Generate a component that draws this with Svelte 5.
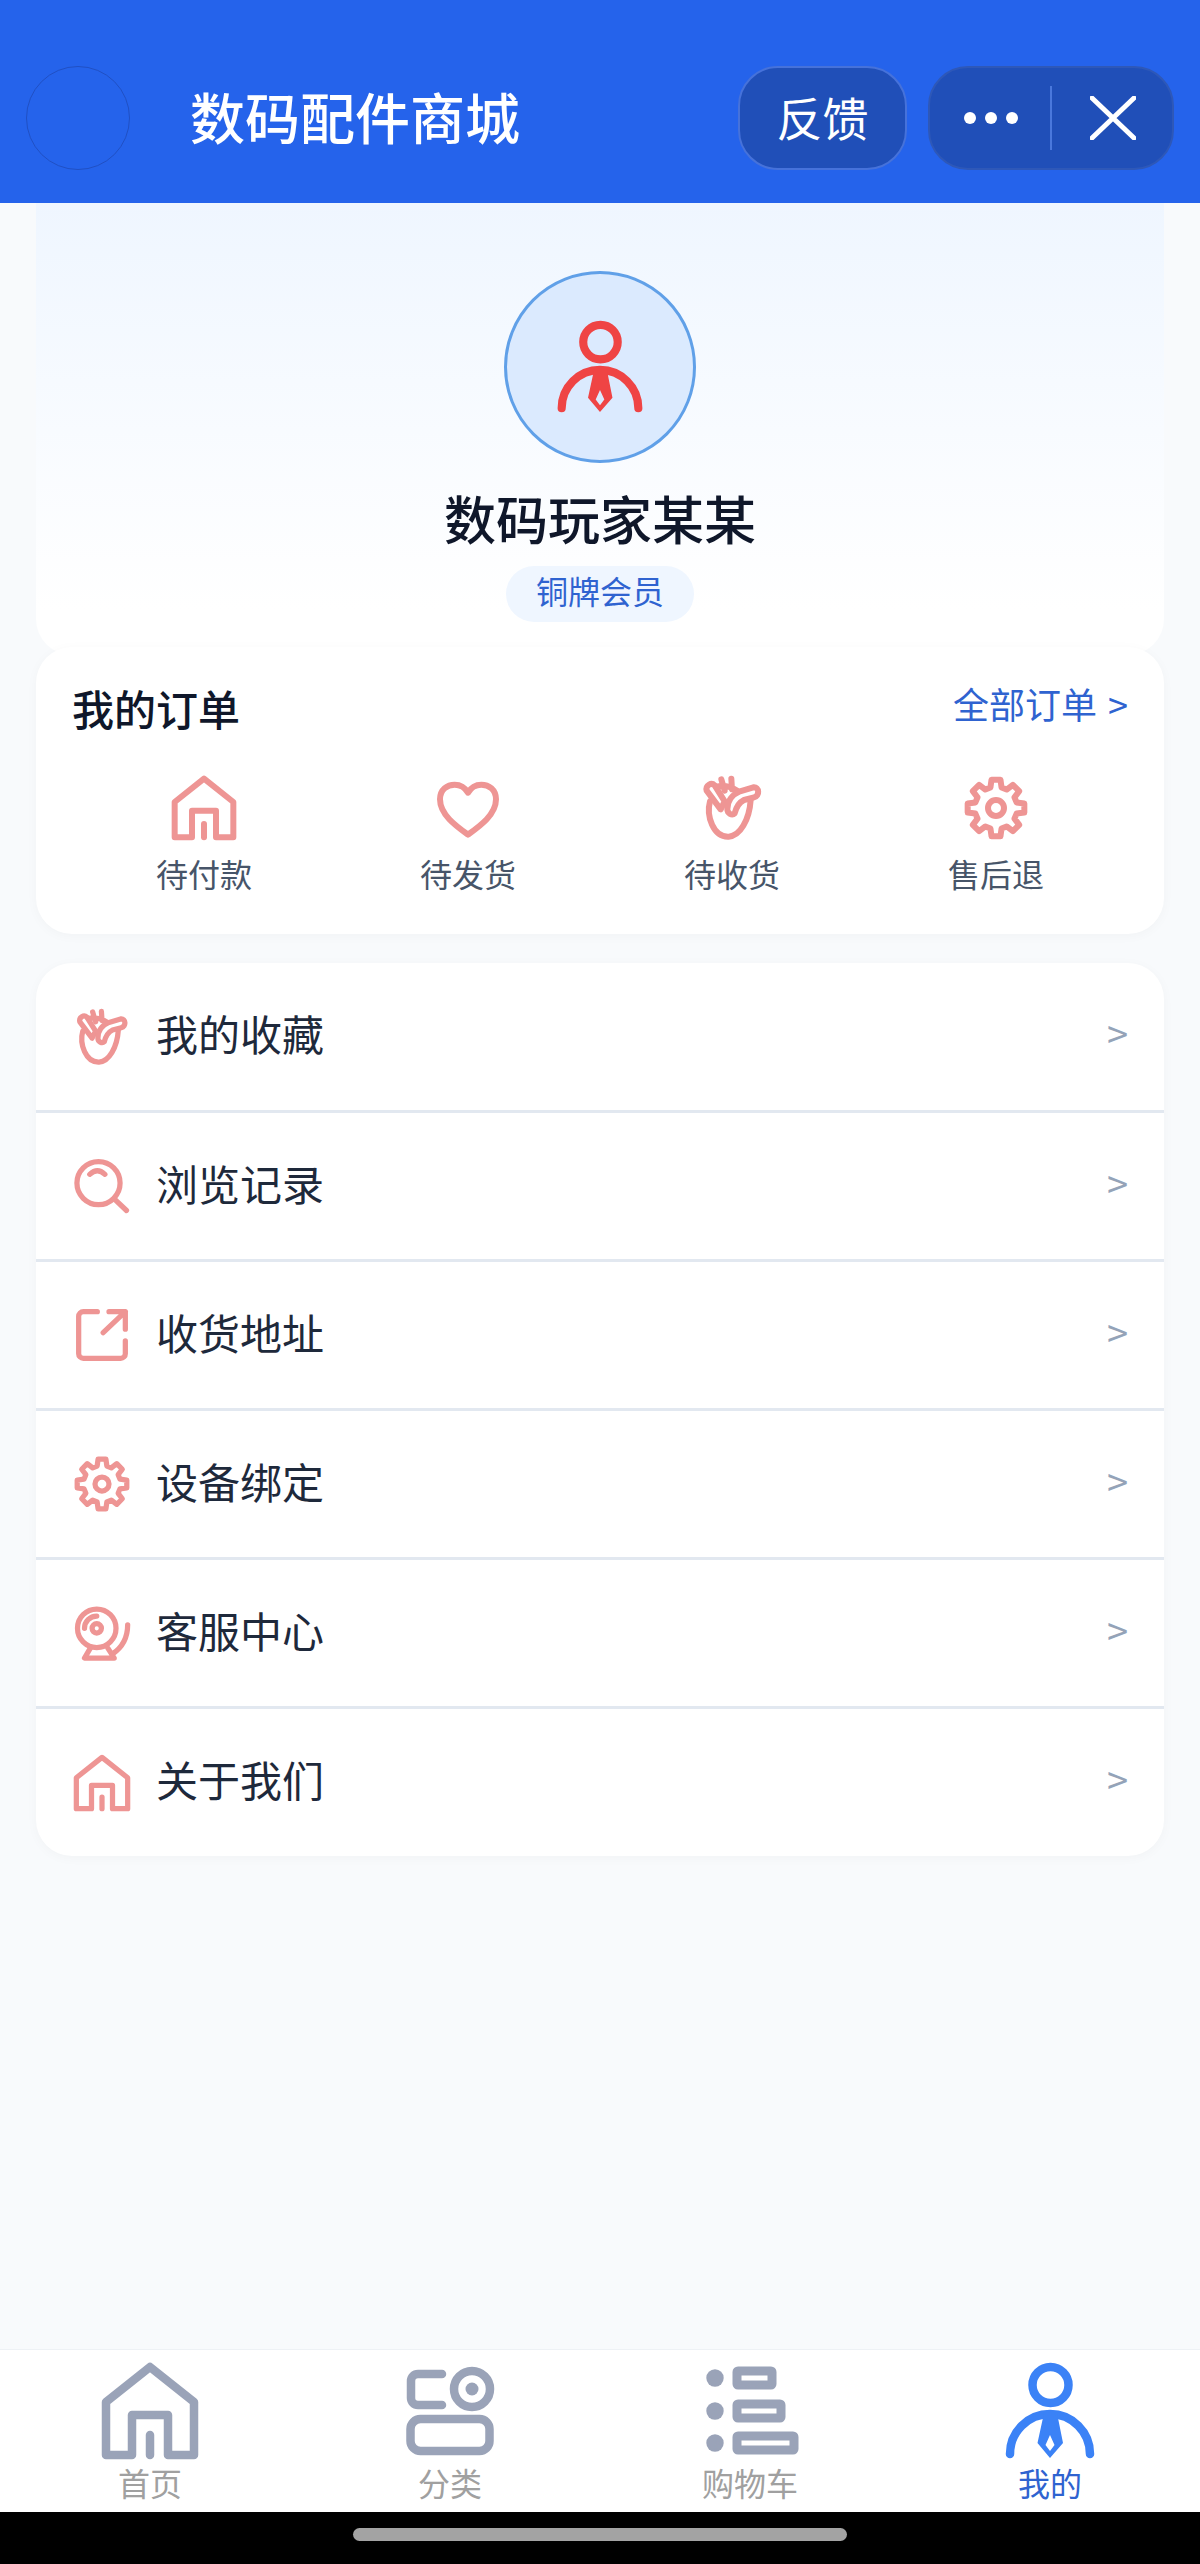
<script>
  const orders = [
    { icon: 'home', label: '待付款' },
    { icon: 'heart', label: '待发货' },
    { icon: 'organ', label: '待收货' },
    { icon: 'gear', label: '售后退' }
  ];
  const menu = [
    { icon: 'organ', label: '我的收藏' },
    { icon: 'search', label: '浏览记录' },
    { icon: 'share', label: '收货地址' },
    { icon: 'gear', label: '设备绑定' },
    { icon: 'bell', label: '客服中心' },
    { icon: 'home', label: '关于我们' }
  ];
  const tabs = [
    { icon: 'home', label: '首页' },
    { icon: 'apps', label: '分类' },
    { icon: 'list', label: '购物车' },
    { icon: 'person', label: '我的', active: true }
  ];

  function gearPath() {
    const pts = [];
    const p = (r, deg) => {
      const a = (deg * Math.PI) / 180;
      return (48 + r * Math.cos(a)).toFixed(1) + ' ' + (48 + r * Math.sin(a)).toFixed(1);
    };
    for (let i = 0; i < 8; i++) {
      const c = i * 45 - 90;
      pts.push(p(32, c - 15), p(43, c - 9), p(43, c + 9), p(32, c + 15));
    }
    return 'M' + pts.join('L') + 'Z';
  }
  const gear = gearPath();
</script>

{#snippet icon(name)}
  <svg class="ic" viewBox="0 0 96 96">
    {#if name === 'home'}
      <path d="M30 92H4V39L48 4L92 39V92H66V52H30Z" />
      <path d="M48 72V92" />
    {:else if name === 'heart'}
      <path d="M48 88C30 75 6 58 6 35C6 20 17 13 28 13C37 13 44 18 48 25C52 18 59 13 68 13C79 13 90 20 90 35C90 58 66 75 48 88Z" />
    {:else if name === 'organ'}
      <path d="M15 38C9 60 20 92 43 91C60 90 74 66 76 36" />
      <path d="M10 22C8 14 17 9 22 14L37 38L31 50Z" />
      <path d="M32 5L37 22M47 4L48 20M24 16C34 14 44 14 56 22" />
      <path d="M41 50C41 38 48 28 60 23L80 17C89 16 90 30 81 32L66 36C58 40 54 48 52 56C48 60 41 56 41 50Z" />
    {:else if name === 'gear'}
      <path d={gear} />
      <circle cx="48" cy="48" r="12" />
    {:else if name === 'search'}
      <circle cx="42" cy="43" r="37" />
      <path d="M69 70L90 90M27 28Q40 16 53 28" />
    {:else if name === 'share'}
      <path d="M40 8H16A8 8 0 0 0 8 16V80A8 8 0 0 0 16 88H80A8 8 0 0 0 88 80V58" />
      <path d="M60 8H88V38M88 8L50 44" />
    {:else if name === 'bell'}
      <circle cx="39" cy="40" r="33" />
      <circle cx="39" cy="40" r="8" />
      <path d="M18 40A21 21 0 0 1 39 19M28 74L18 91H69L58 74M92 34C92 55 84 72 66 84" />
    {:else if name === 'apps'}
      <path d="M40 11H16A7 7 0 0 0 9 18V35A7 7 0 0 0 16 42H40" />
      <circle cx="70" cy="26" r="18" />
      <circle class="solid" cx="70" cy="26" r="6.5" />
      <rect x="8.5" y="56" width="79" height="32" rx="10" />
    {:else if name === 'list'}
      <circle class="solid" cx="13" cy="15" r="8.7" />
      <circle class="solid" cx="13" cy="48" r="8.7" />
      <circle class="solid" cx="13" cy="80" r="8.7" />
      <rect class="sq" x="35" y="8" width="35" height="14" rx="1" />
      <rect class="sq" x="35" y="41" width="44" height="14" rx="1" />
      <rect class="sq" x="35" y="73" width="57" height="14" rx="1" />
    {:else if name === 'person'}
      <circle cx="48.5" cy="22" r="18" />
      <path d="M8 91A40 40 0 0 1 88 91" />
      <path class="solid" fill-rule="evenodd" d="M42 50L35.5 80L48 95L61 80L55 50ZM48 72L43.5 82L48 88L52.5 82Z" />
    {/if}
  </svg>
{/snippet}

<div class="page">
  <header class="top">
    <div class="ghost"></div>
    <h1>数码配件商城</h1>
    <div class="feedback">反馈</div>
    <div class="capsule">
      <div class="more"><i></i><i></i><i></i></div>
      <div class="close">
        <svg viewBox="0 0 46 44"><path d="M2 2L44 42M44 2L2 42" /></svg>
      </div>
    </div>
  </header>

  <main>
    <section class="profile">
      <div class="avatar">{@render icon('person')}</div>
      <div class="name">数码玩家某某</div>
      <div class="tag">铜牌会员</div>
    </section>

    <section class="card orders">
      <div class="orders-head">
        <span class="orders-title">我的订单</span>
        <span class="orders-all">全部订单 &gt;</span>
      </div>
      <div class="orders-grid">
        {#each orders as o}
          <div class="order">
            <span class="pink order-ic">{@render icon(o.icon)}</span>
            <span class="order-label">{o.label}</span>
          </div>
        {/each}
      </div>
    </section>

    <section class="card menu">
      {#each menu as m}
        <div class="row">
          <span class="pink row-ic">{@render icon(m.icon)}</span>
          <span class="row-label">{m.label}</span>
          <span class="chev">&gt;</span>
        </div>
      {/each}
    </section>
  </main>

  <nav class="tabs">
    {#each tabs as t}
      <div class="tab" class:active={t.active}>
        <span class="tab-ic">{@render icon(t.icon)}</span>
        <span class="tab-label">{t.label}</span>
      </div>
    {/each}
  </nav>

  <div class="sys"><div class="bar"></div></div>
</div>

<style>
  :global(body) {
    margin: 0;
    background: #f8fafc;
  }
  .page {
    width: 1200px;
    height: 2564px;
    display: flex;
    flex-direction: column;
    font-family: "Noto Sans CJK SC", "Noto Sans", sans-serif;
    overflow: hidden;
  }
  .ic {
    display: block;
    width: 100%;
    height: 100%;
    fill: none;
    stroke: currentColor;
    stroke-width: 8.5;
    stroke-linecap: round;
    stroke-linejoin: round;
    overflow: visible;
  }
  .ic .solid {
    fill: currentColor;
    stroke: none;
  }
  .ic .sq {
    stroke-linejoin: miter;
    stroke-width: 9;
  }
  .pink .ic {
    stroke-width: 9;
  }

  .top {
    height: 203px;
    box-sizing: border-box;
    flex: none;
    background: #2563eb;
    padding: 66px 26px 33px 26px;
    display: flex;
    align-items: stretch;
    color: #fff;
  }
  .ghost {
    width: 104px;
    border-radius: 50%;
    border: 1px solid #2050c4;
    box-sizing: border-box;
  }
  h1 {
    margin: 0 0 0 60px;
    flex: 1;
    font-size: 55px;
    font-weight: 500;
    line-height: 98px;
    letter-spacing: 0;
  }
  .feedback {
    width: 169px;
    box-sizing: border-box;
    border: 2px solid #4672da;
    border-radius: 40px;
    background: #204fb8;
    font-size: 46px;
    line-height: 96px;
    text-align: center;
    font-weight: 400;
  }
  .capsule {
    width: 246px;
    margin-left: 21px;
    box-sizing: border-box;
    border: 2px solid #2e58b8;
    border-radius: 40px;
    background: #204fb8;
    display: flex;
    align-items: center;
  }
  .more {
    width: 122px;
    height: 64px;
    box-sizing: border-box;
    display: flex;
    justify-content: center;
    align-items: center;
    gap: 9px;
    border-right: 2px solid #4a78dc;
    padding-left: 2px;
  }
  .more i {
    display: block;
    width: 12px;
    height: 12px;
    border-radius: 50%;
    background: #fff;
  }
  .close {
    flex: 1;
    display: flex;
    justify-content: center;
    padding-left: 2px;
  }
  .close svg {
    width: 46px;
    height: 44px;
    fill: none;
    stroke: #fff;
    stroke-width: 5;
    stroke-linecap: round;
  }

  main {
    flex: 1;
    padding: 0 36px;
    min-height: 0;
  }
  .profile {
    height: 452px;
    box-sizing: border-box;
    padding-top: 68px;
    border-radius: 0 0 36px 36px;
    background: linear-gradient(180deg, #eff6ff, #ffffff 90%);
    display: flex;
    flex-direction: column;
    align-items: center;
  }
  .avatar {
    width: 192px;
    height: 192px;
    flex: none;
    box-sizing: border-box;
    border-radius: 50%;
    border: 3px solid #60a0e8;
    background: #dbeafe;
    color: #ef4444;
    padding: 47px;
  }
  .name {
    margin-top: 19px;
    font-size: 52px;
    line-height: 72px;
    font-weight: 500;
    color: #0f172a;
  }
  .tag {
    margin-top: 12px;
    width: 188px;
    height: 56px;
    border-radius: 28px;
    background: #eff6ff;
    color: #2f63d0;
    font-size: 32px;
    line-height: 48px;
    text-align: center;
  }
  .card {
    background: #fff;
    border-radius: 36px;
    box-shadow: 0 2px 12px rgba(15, 23, 42, 0.03);
    position: relative;
  }
  .orders {
    margin-top: -8px;
    height: 287px;
    box-sizing: border-box;
    padding: 36px 36px 0;
  }
  .orders-head {
    display: flex;
    justify-content: space-between;
    align-items: flex-start;
  }
  .orders-title {
    font-size: 42px;
    line-height: 50px;
    font-weight: 500;
    color: #0f172a;
  }
  .orders-all {
    font-size: 36px;
    line-height: 40px;
    color: #2f63d0;
    word-spacing: 3px;
  }
  .orders-grid {
    margin-top: 43px;
    display: grid;
    grid-template-columns: repeat(4, 1fr);
  }
  .order {
    display: flex;
    flex-direction: column;
    align-items: center;
  }
  .pink {
    color: #ee9594;
  }
  .order-ic {
    display: block;
    width: 64px;
    height: 64px;
  }
  .order-label {
    margin-top: 11px;
    font-size: 32px;
    line-height: 44px;
    color: #475569;
  }
  .menu {
    margin-top: 29px;
    overflow: hidden;
  }
  .row {
    height: 146px;
    display: flex;
    align-items: center;
    padding: 0 36px 0 38px;
    border-bottom: 3px solid #e2e8f0;
  }
  .row:first-child {
    height: 147px;
  }
  .row:last-child {
    border-bottom: none;
    height: 147px;
  }
  .row-ic {
    display: block;
    width: 56px;
    height: 56px;
    flex: none;
  }
  .row-label {
    margin-left: 26px;
    flex: 1;
    font-size: 42px;
    line-height: 56px;
    padding-bottom: 7px;
    color: #1e293b;
  }
  .chev {
    font-size: 38px;
    line-height: 56px;
    padding-bottom: 7px;
    color: #94a3b8;
  }

  .tabs {
    flex: none;
    height: 163px;
    box-sizing: border-box;
    background: #fff;
    border-top: 1px solid #eef1f5;
    padding-top: 13px;
    display: grid;
    grid-template-columns: repeat(4, 1fr);
  }
  .tab {
    display: flex;
    flex-direction: column;
    align-items: center;
    color: #9ca3af;
  }
  .tab-ic {
    display: block;
    width: 96px;
    height: 96px;
    color: #9aa3b8;
  }
  .tab-label {
    font-size: 32px;
    line-height: 44px;
    margin-top: 1px;
    color: #a0a0a0;
  }
  .active .tab-ic {
    color: #3b82f6;
  }
  .active .tab-label {
    color: #2f63d0;
    font-weight: 400;
  }
  .sys {
    flex: none;
    height: 52px;
    background: #000;
    padding-top: 16px;
    box-sizing: border-box;
  }
  .bar {
    width: 494px;
    height: 13px;
    margin: 0 auto;
    border-radius: 7px;
    background: #a3a3a3;
  }
</style>
